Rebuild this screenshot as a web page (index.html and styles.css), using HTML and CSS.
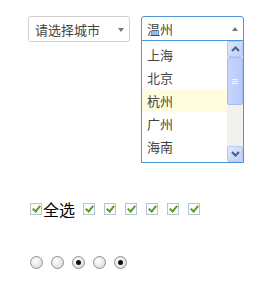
FILE: index.html
```html
<!DOCTYPE html>
<html lang="zh-CN">
<head>
  <meta charset="UTF-8">
  <title>表单控件</title>
  <link rel="stylesheet" href="styles.css">
</head>
<body>
  <div class="selects">
    <div class="select">
      <span class="value">请选择城市</span>
      <span class="arrow down"></span>
    </div>
    <div class="select open">
      <span class="value">温州</span>
      <span class="arrow up"></span>
      <div class="list">
        <ul class="options">
          <li>上海</li>
          <li>北京</li>
          <li class="hover">杭州</li>
          <li>广州</li>
          <li>海南</li>
        </ul>
        <div class="scrollbar">
          <div class="sb-btn">
            <svg width="9" height="6" viewBox="0 0 9 6"><path d="M1 5 L4.5 1.5 L8 5" fill="none" stroke="#4d6185" stroke-width="2"/></svg>
          </div>
          <div class="sb-thumb"><span class="grip"></span></div>
          <div class="sb-track"></div>
          <div class="sb-btn">
            <svg width="9" height="6" viewBox="0 0 9 6"><path d="M1 1 L4.5 4.5 L8 1" fill="none" stroke="#4d6185" stroke-width="2"/></svg>
          </div>
        </div>
      </div>
    </div>
  </div>

  <div class="checks">
    <label class="check-all"><span class="cb"></span>全选</label>
    <span class="cb"></span>
    <span class="cb"></span>
    <span class="cb"></span>
    <span class="cb"></span>
    <span class="cb"></span>
    <span class="cb"></span>
  </div>

  <div class="radios">
    <span class="radio"></span>
    <span class="radio"></span>
    <span class="radio checked"></span>
    <span class="radio"></span>
    <span class="radio checked"></span>
  </div>
</body>
</html>
```

FILE: styles.css
```css
body {
  margin: 0;
  font-family: "Noto Sans CJK SC", "DejaVu Sans", sans-serif;
  background: #fff;
  color: #333;
}

/* Selects */
.selects {
  display: flex;
  gap: 11px;
  padding: 16px 0 0 28px;
}
.select {
  position: relative;
  box-sizing: border-box;
  width: 102px;
  height: 26px;
  border: 1px solid #cfcfcf;
  border-radius: 3px;
  display: flex;
  align-items: center;
  padding-left: 6px;
  font-size: 13px;
  color: #444;
}
.select.open {
  width: 103px;
  height: 25px;
  border-color: #4f94d6;
  border-radius: 3px 3px 0 0;
  padding-left: 5px;
}
.select .value {
  flex: 1;
  line-height: 1;
}
.arrow {
  width: 0;
  height: 0;
  margin-right: 5px;
  border-left: 3px solid transparent;
  border-right: 3px solid transparent;
}
.arrow.down {
  border-top: 4px solid #777;
  margin-top: 2px;
}
.arrow.up {
  border-bottom: 4px solid #777;
}
.list {
  position: absolute;
  top: 23px;
  left: -1px;
  width: 103px;
  height: 123px;
  box-sizing: border-box;
  border: 1px solid #4f94d6;
  background: #fff;
  display: flex;
}
.options {
  list-style: none;
  margin: 0;
  padding: 2px 0 0;
  flex: 1;
}
.options li {
  height: 23px;
  line-height: 23px;
  padding-left: 5px;
  font-size: 13px;
  color: #444;
}
.options li.hover {
  background: #fefde0;
}

/* Scrollbar */
.scrollbar {
  width: 16px;
  display: flex;
  flex-direction: column;
  background: #f3f1eb;
}
.sb-btn {
  height: 16px;
  box-sizing: border-box;
  border: 1px solid #b7c8f2;
  border-radius: 2px;
  background: linear-gradient(135deg, #dde7fe, #bccffb);
  display: flex;
  align-items: center;
  justify-content: center;
}
.sb-thumb {
  height: 48px;
  box-sizing: border-box;
  border: 1px solid #a8bdf5;
  border-radius: 2px;
  background: linear-gradient(90deg, #c6d5fc, #b7cafa);
  display: flex;
  align-items: center;
  justify-content: center;
}
.grip {
  width: 6px;
  height: 5px;
  background: repeating-linear-gradient(180deg, #eef3ff 0 1px, transparent 1px 2px);
}
.sb-track {
  flex: 1;
}

/* Checkboxes */
.checks {
  display: flex;
  align-items: center;
  gap: 9px;
  padding: 155px 0 0 30px;
}
.check-all {
  display: flex;
  align-items: center;
  gap: 1px;
  font-size: 16px;
  color: #000;
  margin-right: -1px;
}
.cb {
  width: 12px;
  height: 12px;
  box-sizing: border-box;
  border: 1px solid #b2c6d6;
  background: #fbfcfd;
  position: relative;
}
.cb::after {
  content: "";
  position: absolute;
  left: 3px;
  top: 0;
  width: 3px;
  height: 6px;
  border-right: 2px solid #5e9e1c;
  border-bottom: 2px solid #5e9e1c;
  transform: rotate(40deg);
}

/* Radios */
.radios {
  display: flex;
  gap: 8px;
  padding: 35px 0 0 30px;
}
.radio {
  width: 13px;
  height: 13px;
  box-sizing: border-box;
  border: 1px solid #8f8f8f;
  border-radius: 50%;
  background: radial-gradient(circle at 40% 35%, #ffffff, #d4d4d4);
  position: relative;
}
.radio.checked::after {
  content: "";
  position: absolute;
  left: 3px;
  top: 3px;
  width: 5px;
  height: 5px;
  border-radius: 50%;
  background: #111;
}
```
